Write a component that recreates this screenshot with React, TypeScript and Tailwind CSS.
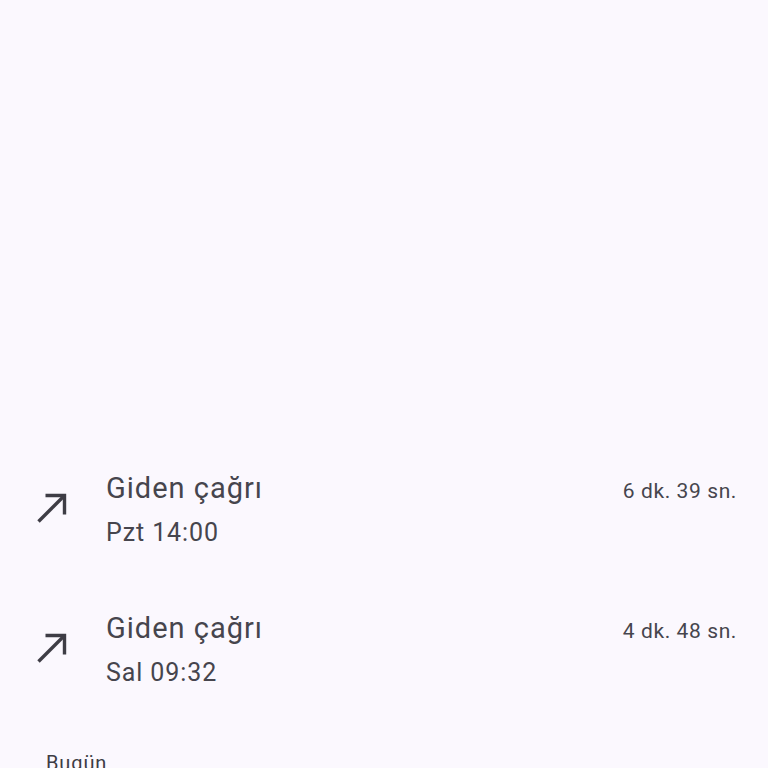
import React from "react";

function ArrowIcon() {
  return (
    <svg width="32" height="32" viewBox="0 0 32 32" className="text-[#3e3d45]">
      <path d="M9.5 4.5 H28.5 V23.5" fill="none" stroke="currentColor" strokeWidth="3.4" strokeLinecap="butt" />
      <path d="M28.5 4.5 L2.5 30.5" fill="none" stroke="currentColor" strokeWidth="3.4" />
    </svg>
  );
}

function CallRow({ time, duration }: { time: string; duration: string }) {
  return (
    <div className="flex items-center pl-[36px] pr-[31px]">
      <div className="w-[70px] shrink-0 flex items-center -mt-[6px]">
        <ArrowIcon />
      </div>
      <div className="flex-1 flex flex-col">
        <div className="flex items-baseline justify-between">
          <span className="text-[29px] leading-[36px] tracking-[1px] text-[#46454d]">Giden çağrı</span>
          <span className="text-[21px] leading-[28px] tracking-[0.6px] text-[#46454d]">{duration}</span>
        </div>
        <span className="mt-[11px] text-[25px] leading-[32px] tracking-[0.9px] text-[#46454d]">{time}</span>
      </div>
    </div>
  );
}

export default function App() {
  return (
    <div
      className="w-[768px] h-[768px] overflow-hidden bg-[#fbf8fe]"
      style={{ fontFamily: "Roboto, 'Noto Sans', sans-serif" }}
    >
      <div className="flex flex-col pt-[470px]">
        <CallRow time="Pzt 14:00" duration="6 dk. 39 sn." />
        <div className="h-[61px]" />
        <CallRow time="Sal 09:32" duration="4 dk. 48 sn." />
        <div className="pl-[46px] mt-[62px] text-[20px] leading-[24px] tracking-[0.9px] text-[#3d3c44]">Bugün</div>
      </div>
    </div>
  );
}
